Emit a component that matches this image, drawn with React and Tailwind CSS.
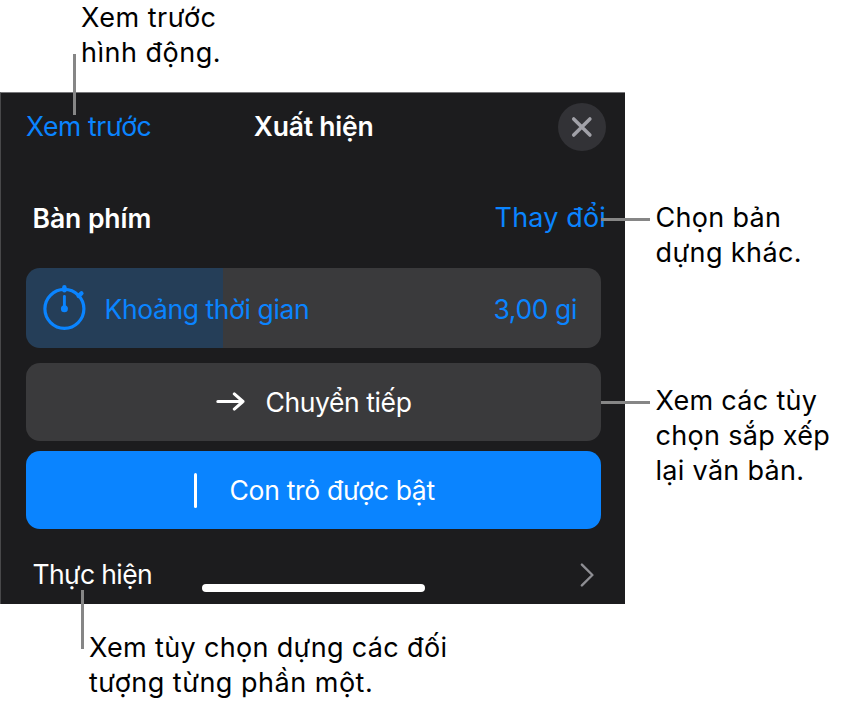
function StopwatchIcon() {
    return (
        <svg className="h-[46px] w-[44px] shrink-0" viewBox="0 0 44 46" fill="none" stroke="currentColor" strokeLinecap="round">
            <circle cx="21.4" cy="23.8" r="19.5" strokeWidth="3.2" />
            <path d="M21.4 2.3v3" strokeWidth="4.4" />
            <path d="M35.6 10.8l2.8-2.4" strokeWidth="4.4" />
            <path d="M21.4 11.5v12" strokeWidth="2.9" />
            <circle cx="21.4" cy="23.8" r="3.5" fill="currentColor" stroke="none" />
        </svg>
    );
}

function ArrowIcon() {
    return (
        <svg className="h-5 w-[30px] shrink-0" viewBox="0 0 30 20" fill="none" stroke="currentColor" strokeWidth="3" strokeLinecap="round" strokeLinejoin="round">
            <path d="M1.8 9.5h25.2M18.3 1.9l8.7 7.6-8.7 7.6" />
        </svg>
    );
}

function CloseIcon() {
    return (
        <svg className="size-[22px]" viewBox="0 0 22 22" fill="none" stroke="currentColor" strokeWidth="3.5" strokeLinecap="round">
            <path d="M2.7 2.9l16.2 16.2M18.9 2.9L2.7 19.1" />
        </svg>
    );
}

function ChevronIcon() {
    return (
        <svg className="h-6 w-[14px]" viewBox="0 0 14 24" fill="none" stroke="currentColor" strokeWidth="2.4" strokeLinecap="round" strokeLinejoin="round">
            <path d="M1.9 1.6L12.4 12 1.9 22.4" />
        </svg>
    );
}

function Panel() {
    return (
        <div className="h-[512px] w-[625px] border-t border-l border-t-[#77777a] border-l-[#48484a] bg-[#1c1c1e] text-[26.5px] leading-9 text-white">
            {/* Header */}
            <div className="grid h-[69px] grid-cols-3 items-center pr-[19px] pb-[2px] pl-[25px]">
                <span className="pb-[2px] tracking-[-0.35px] text-[#0a84ff]">Xem trước</span>
                <span className="pb-[2px] pl-[34.5px] font-semibold tracking-[-0.22px]">Xuất hiện</span>
                <button className="flex size-12 items-center justify-center justify-self-end rounded-full bg-[#323236] text-[#a1a1a8]">
                    <CloseIcon />
                </button>
            </div>

            {/* Build */}
            <div className="flex h-[106px] items-center justify-between pt-[6px] pr-[19px] pl-[31.5px]">
                <span className="font-semibold tracking-[-0.05px]">Bàn phím</span>
                <span className="text-[27px] tracking-[0.15px] text-[#0a84ff]">Thay đổi</span>
            </div>

            <div className="pr-6 pl-[25px]">
                {/* Duration */}
                <div className="flex h-20 items-center rounded-[14px] bg-[linear-gradient(to_right,#253e58_197.5px,#3a3a3c_197.5px)] pr-6 pl-[17px] text-[#0a84ff]">
                    <StopwatchIcon />
                    <span className="ml-[17.5px] pt-[2px] tracking-[-0.4px]">Khoảng thời gian</span>
                    <span className="ml-auto pt-[2px] tracking-[-0.4px]">3,00 gi</span>
                </div>

                <button className="mt-[15px] flex h-[78px] w-full items-center rounded-[14px] bg-[#3a3a3c] pl-[190px]">
                    <ArrowIcon />
                    <span className="ml-[19.5px] tracking-[-0.4px]">Chuyển tiếp</span>
                </button>

                <button className="mt-[10px] flex h-[78px] w-full items-center rounded-[14px] bg-[#0a84ff] pl-[168px]">
                    <span className="h-[35px] w-[3px] rounded-full bg-white"></span>
                    <span className="ml-[32.5px] tracking-[-0.3px]">Con trỏ được bật</span>
                </button>
            </div>

            {/* Delivery */}
            <div className="flex h-[75px] items-start pt-[27px] pr-[31px] pl-[31.5px]">
                <span className="w-[169.5px] tracking-[-0.6px]">Thực hiện</span>
                <div className="mt-[28px] h-2 w-[223px] rounded-full bg-white"></div>
                <div className="mt-[7px] ml-auto text-[#8e8e93]">
                    <ChevronIcon />
                </div>
            </div>
        </div>
    );
}

export default function App() {
    return (
        <div className="h-[708px] w-[841px] overflow-hidden bg-white font-['Inter',sans-serif] text-[27px] leading-[35px] text-black">
            {/* Top callout */}
            <div className="relative h-[92px] pl-[81px] tracking-[0.5px]">
                <p>Xem trước</p>
                <p>hình động.</p>
                <div className="absolute top-[54px] left-[73px] h-[61px] w-[3px] bg-[#868686]"></div>
            </div>

            <div className="flex">
                <Panel />

                {/* Side callouts */}
                <div className="relative flex-1 pt-[108px] pl-[30.5px] tracking-[0.3px] whitespace-nowrap">
                    <p>Chọn bản</p>
                    <p className="tracking-[0.4px]">dựng khác.</p>
                    <p className="mt-[113px]">Xem các tùy</p>
                    <p>chọn sắp xếp</p>
                    <p>lại văn bản.</p>
                    <div className="absolute top-[126px] -left-[24px] h-[3px] w-[49px] bg-[#868686]"></div>
                    <div className="absolute top-[309px] -left-[24px] h-[3px] w-[49px] bg-[#868686]"></div>
                </div>
            </div>

            {/* Bottom callout */}
            <div className="relative pt-[26px] pl-[89px]">
                <p className="tracking-[0.34px]">Xem tùy chọn dựng các đối</p>
                <p className="tracking-[0.5px]">tượng từng phần một.</p>
                <div className="absolute -top-[14px] left-[81px] h-[59px] w-[3px] bg-[#868686]"></div>
            </div>
        </div>
    );
}
